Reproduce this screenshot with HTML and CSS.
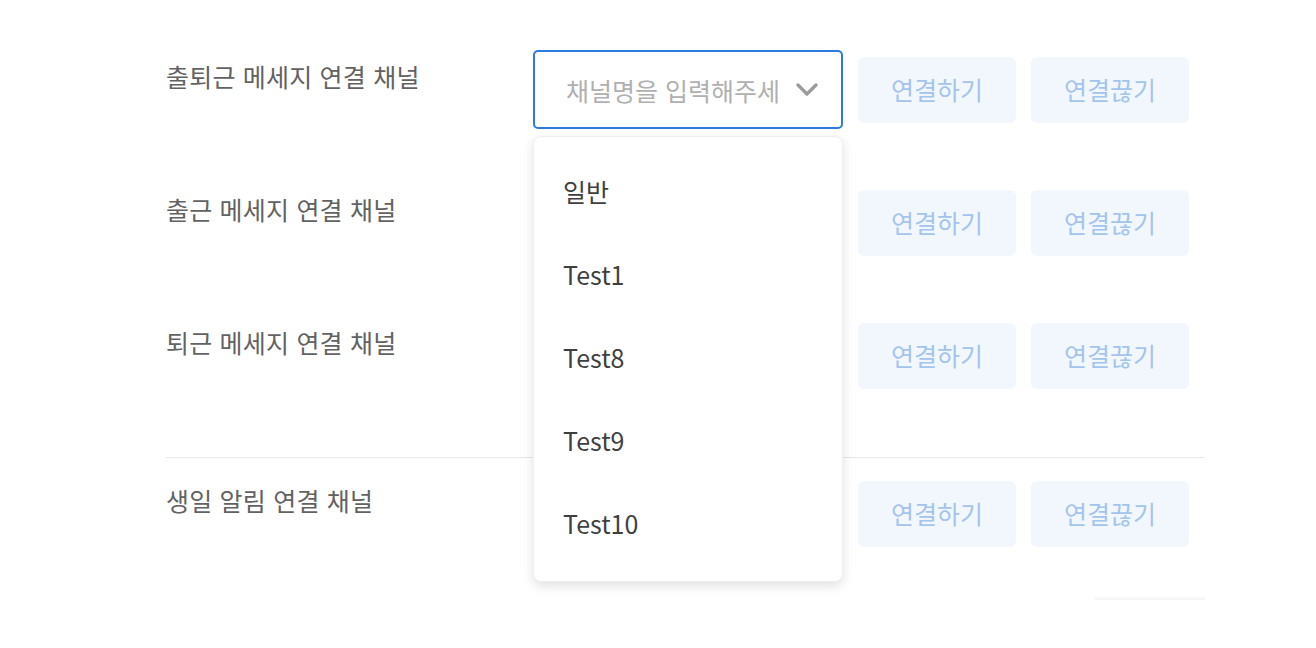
FILE: index.html
```html
<!DOCTYPE html>
<html lang="ko">

<head>
    <meta charset="UTF-8">
    <meta name="viewport" content="width=device-width, initial-scale=1.0">
    <title>채널 연결 설정</title>
    <link rel="stylesheet" href="styles.css">
</head>

<body>
    <div class="settings">
        <div class="group">
            <div class="row">
                <div class="label">출퇴근 메세지 연결 채널</div>
                <div class="select-wrap">
                    <div class="select focused">
                        <span class="placeholder">채널명을 입력해주세요</span>
                        <svg class="chevron" width="22" height="14" viewBox="0 0 22 14">
                            <path d="M2 2 L11 11 L20 2" fill="none" stroke="#9a9a9a" stroke-width="3.2" stroke-linecap="round" stroke-linejoin="round"/>
                        </svg>
                    </div>
                    <ul class="dropdown">
                        <li>일반</li>
                        <li>Test1</li>
                        <li>Test8</li>
                        <li>Test9</li>
                        <li>Test10</li>
                    </ul>
                </div>
                <button class="btn">연결하기</button>
                <button class="btn">연결끊기</button>
            </div>
            <!-- selects below sit under the open list -->
            <div class="row">
                <div class="label">출근 메세지 연결 채널</div>
                <div class="select-wrap">
                    <div class="select"></div>
                </div>
                <button class="btn">연결하기</button>
                <button class="btn">연결끊기</button>
            </div>
            <div class="row">
                <div class="label">퇴근 메세지 연결 채널</div>
                <div class="select-wrap">
                    <div class="select"></div>
                </div>
                <button class="btn">연결하기</button>
                <button class="btn">연결끊기</button>
            </div>
        </div>
        <div class="group second">
            <div class="row">
                <div class="label">생일 알림 연결 채널</div>
                <div class="select-wrap">
                    <div class="select"></div>
                </div>
                <button class="btn">연결하기</button>
                <button class="btn">연결끊기</button>
            </div>
        </div>
        <div class="footer-shadow"></div>
    </div>
</body>

</html>
```

FILE: styles.css
```css
body {
    margin: 0;
    background-color: #fff;
    font-family: "Noto Sans CJK KR", "Noto Sans", sans-serif;
    color: #444;
}

.settings {
    width: 1038px;
    margin-left: 166px;
    padding-top: 50px;
}

.group {
    display: flex;
    flex-direction: column;
    gap: 54px;
    padding-bottom: 62px;
    border-bottom: 1px solid #e8e8e8;
}

.group.second {
    padding-top: 16px;
    padding-bottom: 0;
    border-bottom: none;
}

.row {
    display: flex;
    align-items: center;
}

.label {
    width: 367px;
    align-self: flex-start;
    padding-top: 8px;
    font-size: 25px;
    line-height: 36px;
    color: #626262;
    letter-spacing: 0.2px;
}

.select-wrap {
    position: relative;
    width: 310px;
    margin-right: 15px;
}

.select {
    box-sizing: border-box;
    height: 79px;
    border: 1px solid #ddd;
    border-radius: 5px;
    display: flex;
    align-items: center;
    justify-content: space-between;
    padding: 0 23px 0 32px;
    overflow: hidden;
}

.select.focused {
    border: 2px solid #2c7be0;
    padding-left: 31px;
}

.placeholder {
    font-size: 25px;
    color: #b0b0b0;
    white-space: nowrap;
    overflow: hidden;
    width: 213px;
}

.chevron {
    flex-shrink: 0;
}

/* Open list under the focused select */
.dropdown {
    position: absolute;
    top: 86px;
    left: 0;
    width: 310px;
    box-sizing: border-box;
    margin: 0;
    padding: 13px 0 16px;
    list-style: none;
    background-color: #fff;
    border: 1px solid #efefef;
    border-radius: 8px;
    box-shadow: 0 4px 12px rgba(0, 0, 0, 0.12);
    z-index: 10;
}

.dropdown li {
    height: 83px;
    line-height: 83px;
    padding-left: 29px;
    font-size: 25px;
    color: #3f3f3f;
}

.btn {
    width: 158px;
    height: 66px;
    margin-right: 15px;
    border: none;
    border-radius: 6px;
    background-color: #f2f7fd;
    color: #a3c4ee;
    font-family: inherit;
    font-size: 25px;
    padding: 0 0 2px;
}

.footer-shadow {
    width: 110px;
    height: 3px;
    margin: 44px 0 0 929px;
    background: linear-gradient(#fafafa, #f4f4f4);
}
```
